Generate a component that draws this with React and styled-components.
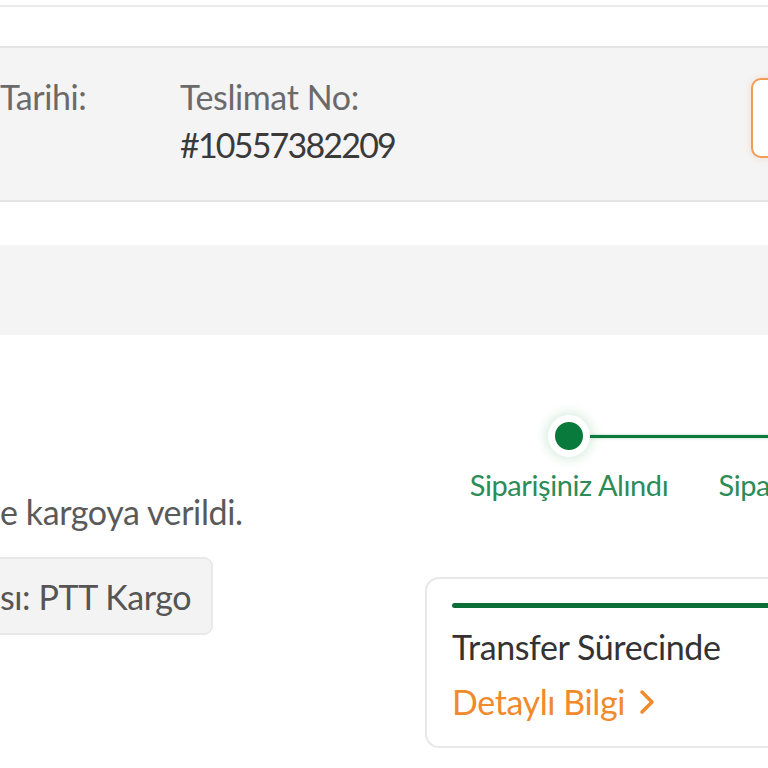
import React from "react";
import styled, { createGlobalStyle } from "styled-components";

const Global = createGlobalStyle`
  html, body { margin: 0; padding: 0; background: #fff; }
  body { font-family: Lato, "Noto Sans", sans-serif; }
`;

const Page = styled.div`
  width: 768px;
  height: 768px;
  overflow: hidden;
  background: #fff;
  display: flex;
  flex-direction: column;
`;

const TopRule = styled.div`
  margin-top: 5px;
  height: 2px;
  background: #ebebeb;
  flex-shrink: 0;
`;

const OrderHeader = styled.div`
  margin-top: 39px;
  height: 156px;
  flex-shrink: 0;
  box-sizing: border-box;
  background: #f4f4f4;
  border-top: 2px solid #e4e4e4;
  border-bottom: 2px solid #e4e4e4;
  display: flex;
  align-items: flex-start;
`;

const InfoCol = styled.div`
  width: ${(p) => p.$w}px;
  flex-shrink: 0;
  padding-top: 25px;
  font-size: 34px;
  line-height: 48px;
  letter-spacing: -0.4px;
`;

const Label = styled.div`
  color: #6a6a6a;
`;

const Value = styled.div`
  color: #3a3a3a;
  letter-spacing: -1.8px;
`;

const Spacer = styled.div`
  flex: 1;
`;

const OutlineButton = styled.div`
  flex-shrink: 0;
  margin-top: 30px;
  width: 120px;
  height: 80px;
  margin-right: -103px;
  box-sizing: border-box;
  border: 2px solid #ef9d55;
  border-radius: 10px;
  background: #fff;
  box-shadow: 0 0 6px rgba(239, 157, 85, 0.25);
`;

const GrayBand = styled.div`
  margin-top: 43px;
  height: 90px;
  flex-shrink: 0;
  background: #f4f4f4;
`;

const Main = styled.div`
  display: flex;
  align-items: flex-start;
  flex: 1;
`;

const LeftCol = styled.div`
  width: 425px;
  flex-shrink: 0;
  display: flex;
  flex-direction: column;
  align-items: flex-start;
  padding-top: 157px;
`;

const Note = styled.div`
  font-size: 34px;
  line-height: 40px;
  color: #5a5a5a;
  letter-spacing: -0.4px;
  white-space: nowrap;
`;

const Chip = styled.div`
  margin-top: 25px;
  height: 78px;
  box-sizing: border-box;
  padding: 0 20px 0 0;
  display: flex;
  align-items: center;
  background: #f3f3f3;
  border: 2px solid #e8e8e8;
  border-left: none;
  border-radius: 0 9px 9px 0;
  font-size: 34px;
  color: #555;
  letter-spacing: -0.4px;
  white-space: nowrap;
`;

const RightCol = styled.div`
  flex-shrink: 0;
  width: 600px;
  display: flex;
  flex-direction: column;
  padding-top: 80px;
`;

const Stepper = styled.div`
  display: flex;
`;

const Step = styled.div`
  width: 288px;
  flex-shrink: 0;
  display: flex;
  flex-direction: column;
  align-items: center;
`;

const DotRow = styled.div`
  width: 100%;
  display: flex;
  align-items: center;
  height: 42px;
`;

const Half = styled.div`
  flex: 1;
  height: 3px;
  background: ${(p) => (p.$on ? "#0b7a3c" : "transparent")};
  box-shadow: ${(p) => (p.$on ? "0 0 3px rgba(11,122,60,0.35)" : "none")};
`;

const Dot = styled.div`
  width: 28px;
  height: 28px;
  flex-shrink: 0;
  border-radius: 50%;
  background: #0a7a3c;
  border: 7px solid #fff;
  box-shadow: 0 0 12px 2px rgba(60, 160, 100, 0.22);
`;

const StepLabel = styled.div`
  margin-top: 11px;
  font-size: 29px;
  line-height: 34px;
  color: #2b8c57;
  letter-spacing: -0.4px;
  white-space: nowrap;
`;

const Card = styled.div`
  margin-top: 75px;
  width: 420px;
  height: 171px;
  box-sizing: border-box;
  border: 2px solid #e8e8e8;
  border-right: none;
  border-radius: 14px 0 0 14px;
  padding: 24px 0 0 25px;
  background: #fff;
`;

const ProgressBar = styled.div`
  height: 5px;
  background: #0b6e37;
  border-radius: 3px 0 0 3px;
`;

const CardTitle = styled.div`
  margin-top: 19px;
  font-size: 34px;
  line-height: 40px;
  color: #333;
  letter-spacing: -0.4px;
`;

const DetailLink = styled.div`
  margin-top: 15px;
  display: flex;
  align-items: center;
  gap: 14px;
  font-size: 34px;
  line-height: 40px;
  color: #f08a2c;
  letter-spacing: -0.4px;
`;

function Chevron() {
  return (
    <svg width="16" height="26" viewBox="0 0 16 26" fill="none">
      <polyline
        points="3,3 13,13 3,23"
        stroke="#f08a2c"
        strokeWidth="3.5"
        strokeLinecap="round"
        strokeLinejoin="round"
      />
    </svg>
  );
}

export default function App() {
  return (
    <Page>
      <Global />
      <TopRule />
      <OrderHeader>
        <InfoCol $w={180}>
          <Label>Tarihi:</Label>
        </InfoCol>
        <InfoCol $w={260}>
          <Label>Teslimat No:</Label>
          <Value>#10557382209</Value>
        </InfoCol>
        <Spacer />
        <OutlineButton />
      </OrderHeader>
      <GrayBand />
      <Main>
        <LeftCol>
          <Note>e kargoya verildi.</Note>
          <Chip>sı: PTT Kargo</Chip>
        </LeftCol>
        <RightCol>
          <Stepper>
            <Step>
              <DotRow>
                <Half />
                <Dot />
                <Half $on />
              </DotRow>
              <StepLabel>Siparişiniz Alındı</StepLabel>
            </Step>
            <Step>
              <DotRow>
                <Half $on />
                <Dot />
                <Half $on />
              </DotRow>
              <StepLabel>Siparişiniz Hazırlanıyor</StepLabel>
            </Step>
          </Stepper>
          <Card>
            <ProgressBar />
            <CardTitle>Transfer Sürecinde</CardTitle>
            <DetailLink>
              Detaylı Bilgi
              <Chevron />
            </DetailLink>
          </Card>
        </RightCol>
      </Main>
    </Page>
  );
}
